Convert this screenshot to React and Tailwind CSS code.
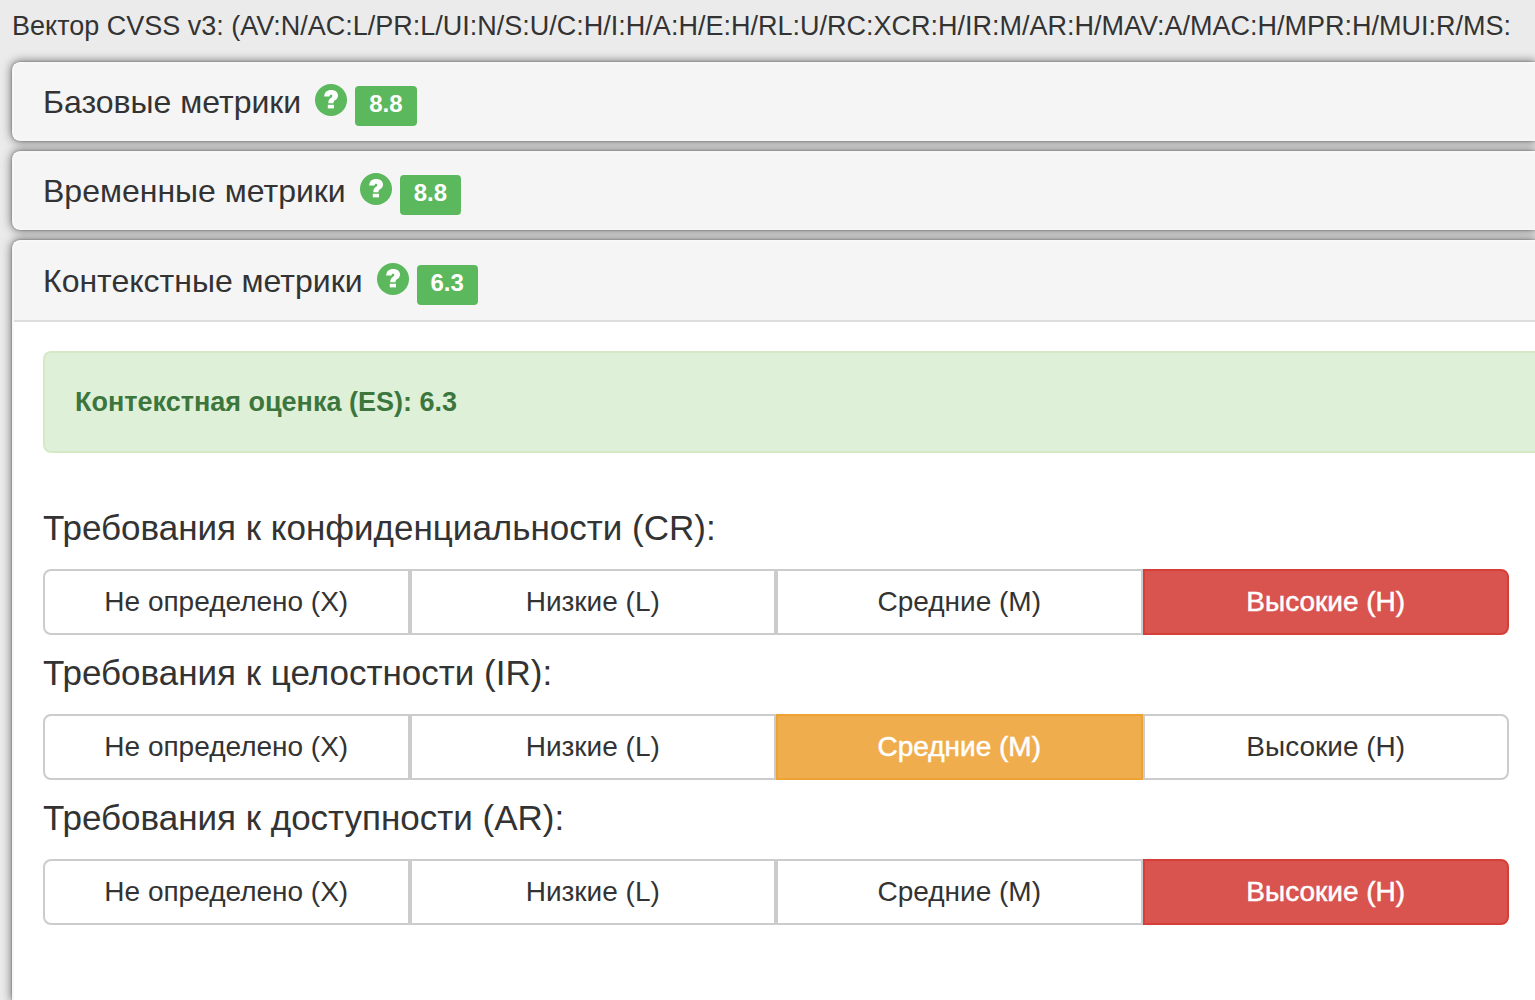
import React, { useState } from 'react';

const VECTOR = '(AV:N/AC:L/PR:L/UI:N/S:U/C:H/I:H/A:H/E:H/RL:U/RC:XCR:H/IR:M/AR:H/MAV:A/MAC:H/MPR:H/MUI:R/MS:';

const OPTIONS = [
  { value: 'X', label: 'Не определено (X)', active: 'border-[#adadad] bg-[#e6e6e6] text-[#333]' },
  { value: 'L', label: 'Низкие (L)', active: 'border-[#4cae4c] bg-[#5cb85c] text-white' },
  { value: 'M', label: 'Средние (M)', active: 'border-[#eea236] bg-[#f0ad4e] text-white [-webkit-text-stroke:0.5px_white]' },
  { value: 'H', label: 'Высокие (H)', active: 'border-[#d43f3a] bg-[#d9534f] text-white [-webkit-text-stroke:0.5px_white]' },
];

const REQUIREMENTS = [
  { id: 'CR', title: 'Требования к конфиденциальности (CR):' },
  { id: 'IR', title: 'Требования к целостности (IR):' },
  { id: 'AR', title: 'Требования к доступности (AR):' },
];

const HelpIcon = () => (
  <svg viewBox="0 0 32 32" className="size-8" aria-hidden="true">
    <circle cx="16" cy="16" r="16" fill="#5cb85c" />
    <path
      d="M9.200 12.400C9.400 8.200 12 6 16.100 6c4.100 0 6.900 2.200 6.900 5.500 0 2.400-1.300 3.700-3 4.800-1.200.8-1.500 1.300-1.500 3h-5.200c0-2.800.7-4 2.400-5.200 1.100-.8 1.600-1.300 1.600-2.100 0-.8-.5-1.200-1.300-1.200-.9 0-1.400.5-1.500 1.600z"
      fill="#fff"
    />
    <rect x="12.800" y="20.800" width="6.200" height="3.600" fill="#fff" />
  </svg>
);

const Panel = ({ title, score, children }) => (
  <section className="rounded-l-lg border-2 border-r-0 border-[#f8f8f8] bg-white shadow-[0_0_2px_rgba(0,0,0,0.4),0_0_10px_1px_rgba(0,0,0,0.5)]">
    <header
      className={
        children
          ? 'flex h-20 items-center rounded-tl-md border-b-2 border-[#ddd] bg-[#f5f5f5] pl-[29px]'
          : 'flex h-[75px] items-center rounded-l-md bg-[#f5f5f5] pl-[29px]'
      }
    >
      <h4 className="text-[32px] leading-9 whitespace-nowrap">{title}</h4>
      <button type="button" aria-label="Справка" className="mb-1 ml-[14px]">
        <HelpIcon />
      </button>
      <span className="mt-2 ml-2 flex h-10 items-start rounded bg-[#5cb85c] px-[14px] pt-1 text-2xl leading-7 font-bold text-white">
        {score}
      </span>
    </header>
    {children}
  </section>
);

const RequirementGroup = ({ id, title, value, onChange }) => (
  <div className="flex flex-col gap-[21px]">
    <h4 id={`title-${id}`} className="text-[35px] leading-10">{title}</h4>
    <div role="group" aria-labelledby={`title-${id}`} className="grid grid-cols-4">
      {OPTIONS.map((option) => (
        <button
          key={option.value}
          type="button"
          aria-pressed={value === option.value}
          onClick={() => onChange(option.value)}
          className={`h-[66px] border-2 text-[28px] leading-10 first:rounded-l-lg last:rounded-r-lg ${
            value === option.value ? option.active : 'border-[#ccc] bg-white text-[#333]'
          }`}
        >
          {option.label}
        </button>
      ))}
    </div>
  </div>
);

export default function App() {
  const [values, setValues] = useState({ CR: 'H', IR: 'M', AR: 'H' });

  return (
    <main className="flex min-h-screen flex-col overflow-hidden bg-[#ebebeb] pl-3 font-['Liberation_Sans',Arial,sans-serif] text-[#333]">
      <p className="pt-[6px] pb-4 text-[27px] leading-10 whitespace-nowrap">Вектор CVSS v3: {VECTOR}</p>
      <div className="flex grow flex-col gap-[10px] *:last:grow *:last:rounded-bl-none *:last:border-b-0">
        <Panel title="Базовые метрики" score="8.8" />
        <Panel title="Временные метрики" score="8.8" />
        <Panel title="Контекстные метрики" score="6.3">
          <div className="pt-[29px] pb-8 pl-[29px]">
            <div className="rounded-l-lg border-2 border-r-0 border-[#d6e9c6] bg-[#dff0d8] px-[30px] py-[29px] text-[27px] leading-10 font-bold text-[#3c763d]">
              Контекстная оценка (ES): 6.3
            </div>
            <div className="mt-[55px] mr-[26px] flex flex-col gap-[18px]">
              {REQUIREMENTS.map(({ id, title }) => (
                <RequirementGroup
                  key={id}
                  id={id}
                  title={title}
                  value={values[id]}
                  onChange={(value) => setValues({ ...values, [id]: value })}
                />
              ))}
            </div>
          </div>
        </Panel>
      </div>
    </main>
  );
}
